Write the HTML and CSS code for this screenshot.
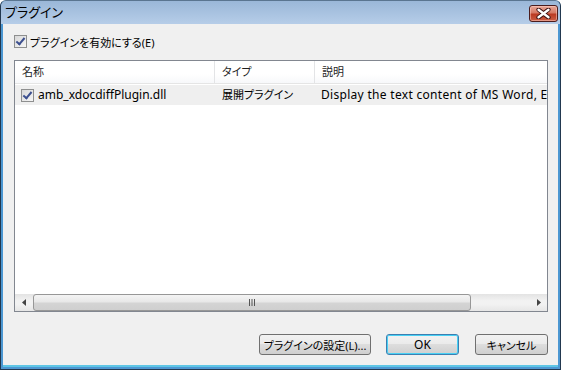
FILE: index.html
```html
<!DOCTYPE html>
<html lang="ja">
<head>
    <meta charset="UTF-8">
    <title>プラグイン</title>
    <link rel="stylesheet" href="styles.css">
</head>
<body>
    <div class="window">
        <div class="titlebar">
            <span class="title">プラグイン</span>
            <button class="close-btn" aria-label="閉じる">
                <svg width="15" height="11" viewBox="0 0 15 11">
                    <path d="M2.5 1.5 L12.5 9.5 M12.5 1.5 L2.5 9.5" stroke="#3a1010" stroke-width="4.2" stroke-linecap="round"/>
                    <path d="M2.5 1.8 L12.5 9.2 M12.5 1.8 L2.5 9.2" stroke="#ffffff" stroke-width="2.4" stroke-linecap="round"/>
                </svg>
            </button>
        </div>

        <div class="client">
            <label class="enable-row">
                <span class="checkbox checked"></span>
                <span class="jp">プラグインを有効にする(E)</span>
            </label>

            <div class="listview">
                <div class="lv-header">
                    <div class="lv-col jp">名称</div>
                    <div class="lv-col jp">タイプ</div>
                    <div class="lv-col jp">説明</div>
                </div>
                <div class="lv-row">
                    <div class="lv-cell name-cell">
                        <span class="checkbox checked"></span>
                        <span>amb_xdocdiffPlugin.dll</span>
                    </div>
                    <div class="lv-cell jp">展開プラグイン</div>
                    <div class="lv-cell desc">Display the text content of MS Word, Excel, PowerPoint, PDF files</div>
                </div>
                <div class="lv-body"></div>
                <div class="hscroll">
                    <div class="sb-arrow">
                        <svg width="4" height="7" viewBox="0 0 4 7"><path d="M4 0 L0 3.5 L4 7 Z" fill="#444"/></svg>
                    </div>
                    <div class="sb-track">
                        <div class="sb-thumb">
                            <svg width="8" height="7" viewBox="0 0 8 7">
                                <path d="M1.5 0 V7 M4 0 V7 M6.5 0 V7" stroke="#555" stroke-width="1"/>
                            </svg>
                        </div>
                    </div>
                    <div class="sb-arrow">
                        <svg width="4" height="7" viewBox="0 0 4 7"><path d="M0 0 L4 3.5 L0 7 Z" fill="#444"/></svg>
                    </div>
                </div>
            </div>

            <div class="buttons">
                <button class="btn btn-wide jp">プラグインの設定(L)...</button>
                <button class="btn btn-default">OK</button>
                <button class="btn jp">キャンセル</button>
            </div>
        </div>
    </div>
</body>
</html>
```

FILE: styles.css
```css
* {
    box-sizing: border-box;
}
body {
    margin: 0;
    background-color: #ffffff;
    font-family: "Noto Sans", "Noto Sans CJK JP", sans-serif;
    font-size: 12px;
    font-feature-settings: "palt";
    color: #000;
}
.jp {
    font-size: 11px;
}
.window {
    width: 561px;
    height: 370px;
    display: flex;
    flex-direction: column;
    border: 1px solid #22384f;
    border-top-color: #5a7590;
    border-radius: 6px 6px 0 0;
    background: #4c97d2;
    padding: 0 2px 2px 2px;
    overflow: hidden;
}
.titlebar {
    height: 23px;
    flex: none;
    display: flex;
    align-items: flex-start;
    justify-content: space-between;
    background: linear-gradient(#9ab7d8, #b6cde8);
    margin: 0 -2px;
    padding: 0 2px 0 4px;
}
.title {
    font-size: 13px;
    line-height: 20px;
    padding-top: 1px;
    color: #000;
}
.close-btn {
    width: 29px;
    height: 17px;
    margin-top: 4px;
    padding: 0;
    border: 1px solid #4b1d1d;
    border-radius: 3px;
    background: linear-gradient(#e8a898 0%, #d67a65 45%, #bb3a22 55%, #cc5e44 100%);
    box-shadow: inset 0 0 0 1px rgba(255, 210, 200, 0.5);
    display: flex;
    align-items: center;
    justify-content: center;
}
.client {
    flex: 1;
    background-color: #f0f0f0;
    border-bottom: 2px solid #5ec6e6;
    padding: 10px 10px 0 11px;
    display: flex;
    flex-direction: column;
}
.enable-row {
    display: flex;
    align-items: center;
    gap: 3px;
    height: 15px;
}
.checkbox {
    width: 13px;
    height: 13px;
    flex: none;
    border: 1px solid #8e8f8f;
    background: linear-gradient(135deg, #d8d8d8, #f6f6f6);
    position: relative;
}
.checkbox.checked::after {
    content: "";
    position: absolute;
    left: 3px;
    top: 0px;
    width: 3px;
    height: 7px;
    border-right: 2px solid #3c4f8f;
    border-bottom: 2px solid #3c4f8f;
    transform: rotate(40deg);
}
.listview {
    margin-top: 11px;
    height: 252px;
    border: 1px solid #828790;
    background-color: #fff;
    display: flex;
    flex-direction: column;
    overflow: hidden;
}
.lv-header,
.lv-row {
    display: grid;
    grid-template-columns: 200px 100px 1fr;
    flex: none;
}
.lv-header {
    height: 23px;
    border-bottom: 1px solid #e5e5e5;
    background: linear-gradient(#ffffff, #ffffff 60%, #f7f8fa);
}
.lv-col {
    padding-left: 7px;
    line-height: 22px;
    border-right: 1px solid #e3e4e6;
    color: #1e1e1e;
}
.lv-col:last-child {
    border-right: none;
}
.lv-row {
    height: 20px;
    background-color: #efefef;
    margin-top: 1px;
}
.lv-cell {
    padding-left: 7px;
    line-height: 20px;
    white-space: nowrap;
    overflow: hidden;
}
.name-cell {
    display: flex;
    align-items: center;
    gap: 4px;
    padding-left: 6px;
}
.desc {
    padding-left: 6px;
    letter-spacing: 0.3px;
}
.lv-body {
    flex: 1;
}
.hscroll {
    height: 17px;
    flex: none;
    display: flex;
    background: linear-gradient(#e3e3e3, #f2f2f2 40%, #f2f2f2 60%, #e6e6e6);
}
.sb-arrow {
    width: 17px;
    display: flex;
    align-items: center;
    justify-content: center;
}
.sb-track {
    flex: 1;
    padding: 0 59px 0 1px;
}
.sb-thumb {
    height: 17px;
    border: 1px solid #979797;
    border-radius: 3px;
    background: linear-gradient(#f4f4f4, #e8e8e8 45%, #d4d4d4 55%, #cfcfcf);
    display: flex;
    align-items: center;
    justify-content: center;
}
.buttons {
    display: flex;
    justify-content: flex-end;
    margin-top: 22px;
}
.btn {
    height: 21px;
    width: 73px;
    margin-left: 16px;
    padding: 0;
    border: 1px solid #707070;
    border-radius: 3px;
    background: linear-gradient(#f2f2f2, #ebebeb 45%, #dddddd 50%, #cfcfcf);
    font-family: inherit;
    font-size: 12px;
    font-feature-settings: "palt";
    white-space: nowrap;
    color: #000;
}
.btn.jp {
    font-size: 11px;
}
.btn-wide {
    width: 112px;
    margin-left: 0;
}
.btn-default {
    margin-left: 15px;
    border-color: #3c7fb1;
    box-shadow: inset 0 0 0 1px #48d0f4;
}
```
